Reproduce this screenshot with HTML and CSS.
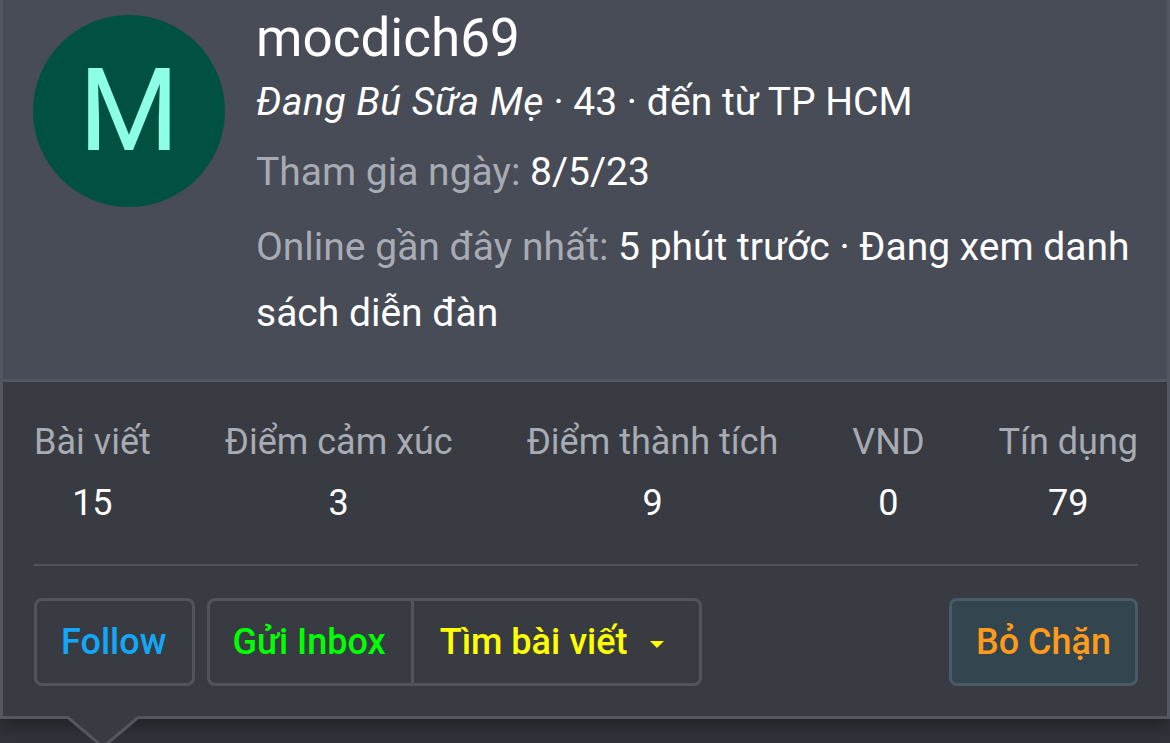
FILE: index.html
```html
<!DOCTYPE html>
<html lang="vi">
<head>
    <meta charset="UTF-8">
    <meta name="viewport" content="width=device-width, initial-scale=1.0">
    <title>mocdich69</title>
    <link rel="stylesheet" href="styles.css">
</head>
<body>
    <div class="card">
        <div class="card-top">
            <div class="avatar">M</div>
            <div class="info">
                <h1 class="username">mocdich69</h1>
                <div class="line"><em>Đang Bú Sữa Mẹ</em> · 43 · đến từ TP HCM</div>
                <div class="line line-join"><span class="muted">Tham gia ngày:</span> 8/5/23</div>
                <div class="line line-seen"><span class="muted">Online gần đây nhất:</span> 5 phút trước · Đang xem danh sách diễn đàn</div>
            </div>
        </div>
        <div class="card-bottom">
            <div class="stats">
                <div class="stat"><div class="stat-label">Bài viết</div><div class="stat-value">15</div></div>
                <div class="stat"><div class="stat-label">Điểm cảm xúc</div><div class="stat-value">3</div></div>
                <div class="stat"><div class="stat-label">Điểm thành tích</div><div class="stat-value">9</div></div>
                <div class="stat"><div class="stat-label">VND</div><div class="stat-value">0</div></div>
                <div class="stat"><div class="stat-label">Tín dụng</div><div class="stat-value">79</div></div>
            </div>
            <div class="actions">
                <button class="btn btn-follow">Follow</button>
                <div class="btn-group">
                    <button class="btn btn-inbox">Gửi Inbox</button>
                    <button class="btn btn-search">Tìm bài viết <span class="caret"></span></button>
                </div>
                <button class="btn btn-unblock">Bỏ Chặn</button>
            </div>
        </div>
        <svg class="arrow" width="70" height="28" viewBox="0 0 70 28">
            <polygon points="0,0 35,30 70,0" fill="#383b42"/>
            <polyline points="0,1.5 32,28.5 38,28.5 70,1.5" fill="none" stroke="#53575f" stroke-width="3"/>
        </svg>
    </div>
</body>
</html>
```

FILE: styles.css
```css
* {
    padding: 0;
    margin: 0;
    box-sizing: border-box;
}
body {
    background: #30333a;
    font-family: Roboto, "Noto Sans", sans-serif;
    color: #fff;
    height: 743px;
    overflow: hidden;
}
.card {
    position: relative;
    width: 1170px;
    border: 3px solid #53575f;
    border-top: none;
    box-shadow: 0 6px 18px rgba(0, 0, 0, 0.35);
}
.card-top {
    display: flex;
    background: #474c56;
    padding: 7px 25px 33px 30px;
    border-bottom: 3px solid #53575f;
}
.avatar {
    flex: none;
    width: 192px;
    height: 192px;
    margin-top: 8px;
    margin-right: 31px;
    border-radius: 50%;
    background: #00513f;
    color: #8cffe4;
    font-size: 115px;
    line-height: 192px;
    text-align: center;
}
.info {
    flex: 1;
}
.username {
    font-size: 53px;
    font-weight: 400;
    line-height: 62px;
}
.line {
    font-size: 39px;
    line-height: 66px;
}
.line em {
    font-style: italic;
    letter-spacing: 0.5px;
}
.line-join {
    margin-top: 4px;
}
.line-seen {
    margin-top: 9px;
}
.muted {
    color: #a7abb3;
}
.card-bottom {
    background: #383b42;
    padding: 30px 29px 30px 31px;
}
.stats {
    display: flex;
    justify-content: space-between;
    padding-bottom: 30px;
    border-bottom: 2px solid #50545c;
}
.stat {
    text-align: center;
    font-size: 36px;
    line-height: 61px;
}
.stat-label {
    color: #a7abb3;
}
.actions {
    display: flex;
    gap: 12px;
    margin-top: 32px;
}
.btn {
    font-family: Roboto, "Noto Sans", sans-serif;
    font-size: 36px;
    font-weight: 500;
    height: 88px;
    padding: 0 24px;
    background: #383b42;
    border: 3px solid #50545c;
    border-radius: 8px;
}
.btn-follow {
    color: #12a8f7;
    padding: 0 26px 0 24px;
}
.btn-group {
    display: flex;
}
.btn-group .btn {
    border-radius: 0;
}
.btn-inbox {
    color: #00ff00;
    border-radius: 8px 0 0 8px !important;
    padding: 0 25px 0 22px;
}
.btn-search {
    color: #ffff00;
    border-left: none;
    border-radius: 0 8px 8px 0 !important;
    padding: 0 35px 0 26px;
}
.caret {
    display: inline-block;
    width: 0;
    height: 0;
    margin-left: 14px;
    vertical-align: middle;
    border-left: 7px solid transparent;
    border-right: 7px solid transparent;
    border-top: 7px solid #ffff00;
}
.btn-unblock {
    margin-left: auto;
    color: #ff9a1a;
    background: #33454f;
    border-color: #4a5b67;
}
.arrow {
    position: absolute;
    left: 65px;
    bottom: -28px;
}
```
